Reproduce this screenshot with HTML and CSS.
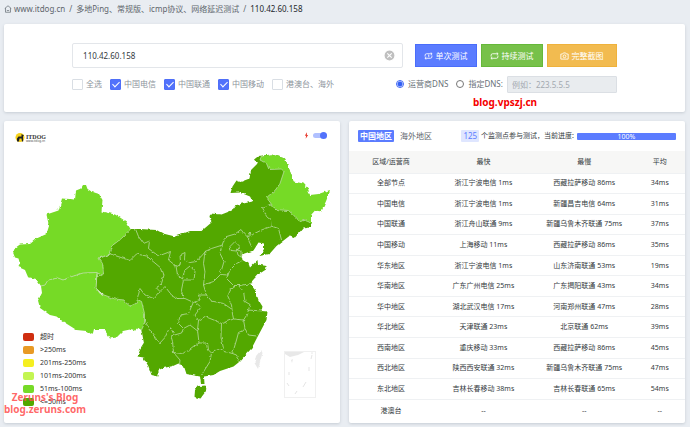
FILE: index.html
```
<!DOCTYPE html>
<html lang="zh-CN">
<head>
<meta charset="utf-8">
<title>110.42.60.158</title>
<link rel="stylesheet" href="styles.css">
</head>
<body>
<nav class="crumbs">
  <svg class="home" viewBox="0 0 16 16"><path d="M1.500 7 8 1.500 14.500 7M3 6v8.500h10V6M5.500 10.500q2.500 2 5 0"/></svg>
  <a href="#">www.itdog.cn</a><span>/</span><a href="#">多地Ping、常规版、icmp协议、网络延迟测试</a><span>/</span><b>110.42.60.158</b>
</nav>

<form class="card search">
  <div class="search-inner">
    <div class="row">
      <div class="host">
        <input type="text" value="110.42.60.158" aria-label="Host">
        <button type="button" class="clear" aria-label="Clear"><svg viewBox="0 0 10 10"><circle cx="5" cy="5" r="5"/><path d="M3 3l4 4M7 3l-4 4"/></svg></button>
      </div>
      <div class="actions">
        <button type="button" class="btn blue"><svg viewBox="0 0 16 14"><path d="M2 8V5.500Q2 3 4.500 3H14M12 1l2.500 2L12 5M14 6v2.500Q14 11 11.500 11H2M4 9l-2.500 2L4 13M7.500 5.500 8.500 5v4"/></svg>单次测试</button>
        <button type="button" class="btn green"><svg viewBox="0 0 16 14"><path d="M2 8V5.500Q2 3 4.500 3H14M12 1l2.500 2L12 5M14 6v2.500Q14 11 11.500 11H2M4 9l-2.500 2L4 13"/></svg>持续测试</button>
        <button type="button" class="btn amber"><svg viewBox="0 0 16 14"><path d="M1.500 3.500h3L6 1.500h4l1.500 2h3v9h-13z"/><circle cx="8" cy="7.500" r="2.500"/></svg>完整截图</button>
      </div>
    </div>
    <div class="row options">
      <div class="checks">
        <label><input type="checkbox">全选</label>
        <label><input type="checkbox" checked>中国电信</label>
        <label><input type="checkbox" checked>中国联通</label>
        <label><input type="checkbox" checked>中国移动</label>
        <label><input type="checkbox">港澳台、海外</label>
      </div>
      <div class="dns">
        <label><input type="radio" name="dns" checked>运营商DNS</label>
        <label><input type="radio" name="dns">指定DNS:</label>
        <input type="text" class="dns-input" placeholder="例如：223.5.5.5" aria-label="DNS" disabled>
      </div>
    </div>
  </div>
  <div class="mark mark-top">blog.vpszj.cn</div>
</form>

<main class="panels">
  <section class="card map-card">
    <svg class="map" viewBox="4 121 336 302">
      <defs>
        <filter id="rough" x="0" y="0" width="100%" height="100%">
          <feTurbulence type="fractalNoise" baseFrequency="0.22" numOctaves="2" seed="4"/>
          <feDisplacementMap in="SourceGraphic" scale="3" xChannelSelector="R" yChannelSelector="G"/>
        </filter>
      </defs>
      <g filter="url(#rough)">
        <path class="d" d="M130.500 229 140 229 156.500 230 163 233.500 175 236.500 190 231 201.500 231 211.500 222.500 209.500 216.500 210.500 213.500 221.500 214.500 233 210 236.500 205 252.500 201.500 250 196.500 240 192.500 230.500 193 232.500 186.500 236.500 180.500 240.500 182 249.500 178.500 251 170 257.500 163.500 254 159.500 258.500 156 271.500 154.500 285 158.500 289.500 170 293.500 181.500 300 215 311 222 311 227 306 228.500 304 227 298.500 233.500 295 237.500 290 235.500 276.500 246 269.500 254 259.500 256 264 249 264 243.500 258.500 242.500 253.500 250.500 241.500 254.500 242.500 260 248.500 263.500 250 267.500 257.500 260 258 264.500 266.500 266 266 269.500 257.500 275 250 283.500 255 290 258.500 300 262.500 306.500 261.500 311 267.500 311.500 266.500 320 258.500 335 251.500 348.500 238.500 362.500 233.500 366.500 220 371 213.500 375 204 376.500 204.500 384 201 384 200 376.500 186.500 374 184 366.500 178.500 363.500 173 366 163.500 368 158.500 370 158.500 376.500 151.500 375 148.500 366.500 143.500 357.500 137.500 356.500 140 350 144 343.500 141.500 330 96 288 99 258.500 113 245Z"/>
        <path class="d" d="M198 386 206.500 385.500 206 391 200.500 398.500 194.500 397 195 390Z"/>
        <path class="l" d="M83 185 81 188.500 76 190.500 75 199.500 62 198.500 58.500 210.500 46.500 214.500 49 226 46.500 234 36.500 238.500 30 244 20 244.500 15 248 13 252.500 15 257.500 18.500 258.500 20 264 18.500 267 25 270 28 277 36 279 41 286 45 285 48 280 58 278 63 280 72 276.500 83 273 97 272.500 100 275 103.500 274 102.500 268.500 104 269 102.500 263.500 99 258.500 110 254 113 245 121.500 238.500 130.500 229 126 221.500 120 217.500 115 214.500 101.500 211.500 102.500 200 99 194 91.500 191.500 87.500 189 86 185Z"/>
        <path class="l" d="M41 286 42 293 38 300.500 40 308 50 315 56.500 316.500 63 321.500 76.500 330 86.500 331 92.500 335 94 329 104 329 110 338.500 116.500 337.500 123 331 130 329.500 135 331 137.500 327.500 141.500 330 144.500 323.500 144.500 313.500 141.500 301.500 137.500 299.500 136 303.500 131.500 305.500 126.500 303.500 124 300 115 299 100 293.500 96 288 97 272.500 83 273 72 276.500 63 280 58 278 48 280 45 285Z"/>
        <path class="l" d="M261.500 156 260 160 266.500 163.500 269 169.500 281.500 169 284 171.500 280 183.500 275 190.500 266.500 197.500 271 203.500 275 209.500 288.500 210.500 295 216.500 300 221.500 306.500 220 311 224 311 215 315 210.500 321.500 211.500 326.500 200 330 190 318.500 194 310 195 308 188.500 303.500 183.500 293.500 181.500 289.500 170 285 158.500 271.500 154.500Z"/>
        <g class="b">
          <path d="M41 286 45 285 48 280 58 278 63 280 72 276.500 83 273 97 272.500 100 275 103.500 274 102.500 263.500 99 258.500 110 254 113 245 121.500 238.500 130.500 229"/>
          <path d="M97 273 96 288 100 293.500 115 299 124 300 126.500 303.500 131.500 305.500 136 303.500 137.500 299.500 141.500 301.500 144.500 313.500 144.500 323.500 141.500 330"/>
          <path d="M261.500 156 260 160 266.500 163.500 269 169.500 281.500 169 284 171.500 280 183.500 275 190.500 266.500 197.500 271 203.500 275 209.500 288.500 210.500 295 216.500 300 221.500 306.500 220 311 224"/>
          <path d="M271 204 262.500 207.500 266.500 216.500 270.500 220 271 226 278.500 228.500 281.500 240M271 226.500 261.500 230 251.500 235 249.500 232 248.500 240 251.500 246.500"/>
          <path d="M248.500 238 243.500 233 241 229.500 235 234 225 237 222.500 244 220 253.500 224 261.500 221.500 270 220 273M222.500 245 211.500 248.500 205 251.500 203.500 263.500 205 272 203.500 285 213.500 281.500 220.500 274.500 228.500 275"/>
          <path d="M230 246.500 235 241.500 240 246.500 236.500 251 231 250.500ZM236.500 249 241 251.500 241 257 238 255Z"/>
          <path d="M241.500 261 236.500 263.500 230 270 226.500 278.500 233.500 285.500 241.500 285.500 251.500 283M235 286.500 230.500 290 227.500 296.500 231.500 305 232.500 314 233.500 319"/>
          <path d="M238.500 285.500 243.500 291.500 245 301.500 250 304.500 248.500 310 262 311M250 310 243.500 320 245 328.500 248.500 335 256.500 336M244 330 238.500 332.500 236.500 340 232.500 353.500 236.500 355 238.500 361.500"/>
          <path d="M243.500 320 233.500 319 221.500 323.500 215 320.500 205 316.500 198.500 320.500 197.500 330 199 343 207.500 343 208.500 350 211.500 353 220 348.500 225 351.500 232.500 353.500M221.500 323.500 221 336.500 223.500 348.500M211.500 353 210 361.500 201.500 375"/>
          <path d="M199 343 190 350 181.500 353.500 173.500 352.500 180 360 179.500 365M197 330.500 190 325 183.500 328.500 181.500 333 171 336 172.500 341.500 173.500 352.500M183.500 328.500 178.500 323.500 180 315 188.500 313.500 193 303M195 302 201 307 195 315 198.500 320.500"/>
          <path d="M177 298.500 185 298.500 193.500 302.500 200 300 198.500 295 206.500 295 211.500 301 223.500 303.500 231.500 309M203.500 285 206.500 295"/>
          <path d="M135.500 229 138.500 236.500 143.500 243.500 149.500 241 148.500 248.500 158.500 256 170.500 251.500 168.500 260 176 266 180.500 263.500 180 255 185 252.500 184.500 260 190 262.500 196.500 261.500 206 251"/>
          <path d="M176 266 177.500 275 182.500 279 185 270 190 266 195 271.500 194 280 183.500 280 181.500 290 183 298"/>
          <path d="M99 258 110.500 254 130 260.500 136.500 254 146.500 256 161.500 268.500 164 275 161.500 283.500 156.500 288 160 291.500 165 286.500 171.500 295 177.500 298.500M159 292 153.500 298.500 145 295 140 288.500 137.500 299M145 320 148.500 328.500 159.500 343.500 165 337.500 170 326.500 173.500 333.500"/>
        </g>
        <path class="g" d="M261 350 262.500 353 258 369 254.500 363 256 356Z"/>
      </g>
      <rect class="inset" x="284.500" y="351.500" width="31" height="46"/>
      <path class="g" d="M285 352H304L298 355 290 357 285 354ZM311 352.500h2l-1 2zM291 360l2-1-1 4z"/>
      <path class="dash" d="M312 355l-1 4M309 367v4M306 382l-3 5M297 391l-2 3M287 383l2 3M289 372v3"/>
      <circle class="logo" cx="20" cy="137.500" r="4.500"/>
      <path class="dog" d="M17 141.500v-3l1.500-2h3v-2.500l1.500 1 1 .500-1 1 .2 5h-1.200l-.5-3h-2l-.5 3z"/>
      <text class="brand" x="26" y="138.500">ITDOG</text>
      <text class="brand-sub" x="26" y="142">www.itdog.cn</text>
    </svg>
    <label class="auto"><svg viewBox="0 0 6 8"><path d="M3.500 0 1 4.200h1.500L2 8l3-4.500H3.500z"/></svg><input type="checkbox" checked aria-label="Auto"></label>
    <ul class="legend">
      <li class="c1">超时</li><li class="c2">&gt;250ms</li><li class="c3">201ms-250ms</li><li class="c4">101ms-200ms</li><li class="c5">51ms-100ms</li><li class="c6">&lt;=50ms</li>
    </ul>
    <div class="mark mark-map">Zeruns's Blog<br>blog.zeruns.com</div>
  </section>

  <section class="card result">
    <header class="tabs">
      <button type="button" class="tab active">中国地区</button>
      <button type="button" class="tab">海外地区</button>
      <span class="count">125</span><span class="note">个监测点参与测试，当前进度:</span>
      <div class="bar">100%</div>
    </header>
    <div class="table-wrap">
    <table>
      <thead><tr><th>区域/运营商</th><th>最快</th><th>最慢</th><th>平均</th></tr></thead>
      <tbody>
        <tr><td>全部节点</td><td>浙江宁波电信 1ms</td><td>西藏拉萨移动 86ms</td><td>34ms</td></tr>
        <tr><td>中国电信</td><td>浙江宁波电信 1ms</td><td>新疆昌吉电信 64ms</td><td>31ms</td></tr>
        <tr><td>中国联通</td><td>浙江舟山联通 9ms</td><td>新疆乌鲁木齐联通 75ms</td><td>37ms</td></tr>
        <tr><td>中国移动</td><td>上海移动 11ms</td><td>西藏拉萨移动 86ms</td><td>35ms</td></tr>
        <tr><td>华东地区</td><td>浙江宁波电信 1ms</td><td>山东济南联通 53ms</td><td>19ms</td></tr>
        <tr><td>华南地区</td><td>广东广州电信 25ms</td><td>广东揭阳联通 43ms</td><td>34ms</td></tr>
        <tr><td>华中地区</td><td>湖北武汉电信 17ms</td><td>河南郑州联通 47ms</td><td>28ms</td></tr>
        <tr><td>华北地区</td><td>天津联通 23ms</td><td>北京联通 62ms</td><td>39ms</td></tr>
        <tr><td>西南地区</td><td>重庆移动 33ms</td><td>西藏拉萨移动 86ms</td><td>45ms</td></tr>
        <tr><td>西北地区</td><td>陕西西安联通 32ms</td><td>新疆乌鲁木齐联通 75ms</td><td>47ms</td></tr>
        <tr><td>东北地区</td><td>吉林长春移动 38ms</td><td>吉林长春联通 65ms</td><td>54ms</td></tr>
        <tr><td>港澳台</td><td>--</td><td>--</td><td>--</td></tr>
      </tbody>
    </table>
    </div>
  </section>
</main>
</body>
</html>
```

FILE: styles.css
```
* { box-sizing: border-box; }
body {
  margin: 0;
  padding: 0 5px 3px 4px;
  background: #e9edf2;
  color: #3c4045;
  font: 8px/12px "Noto Sans", "Noto Sans CJK SC", sans-serif;
}
button, input { font: inherit; color: inherit; margin: 0; }
a { color: #5f666d; text-decoration: none; }
.crumbs { display: flex; align-items: center; height: 24px; padding-bottom: 7px; color: #5f666d; }
.crumbs span { padding: 0 4px; }
.crumbs b { font-weight: 400; color: #24282c; }
.home { width: 8px; height: 8px; margin-right: 2px; fill: none; stroke: #6a7178; stroke-width: 1.500; }
.card { position: relative; background: #fff; border-radius: 2px; box-shadow: 0 1px 3px #c6ccd4; }

.search { padding: 19px 0 20px; }
.search-inner { width: 80%; margin: 0 auto; }
.row { display: flex; justify-content: space-between; gap: 12px; }
.host { position: relative; flex: 1; display: flex; }
.host input { width: 100%; height: 25px; padding: 0 10px; border: 1px solid #e3e6ea; border-radius: 2px; color: #343a40; }
.clear { position: absolute; right: 8px; top: 7px; width: 11px; height: 11px; padding: 0; border: 0; background: none; }
.clear svg { display: block; fill: #bfbfbf; stroke: #fff; }
.actions { display: flex; gap: 4px; padding: 1px 0; }
.btn { display: flex; align-items: center; justify-content: center; gap: 2px; width: 62px; padding: 0; border: 1px solid; color: #fff; }
.btn svg { width: 9px; height: 8px; fill: none; stroke: #fff; stroke-width: 1.500; }
.blue { background: #5b7cff; border-color: #4a6dfa; }
.green { background: #77c14a; border-color: #66b83a; }
.amber { width: 70px; background: #f2bb50; border-color: #efb23c; }
.options { margin-top: 8px; height: 16px; align-items: center; }
.checks, .dns, .options label { display: flex; align-items: center; }
.checks { gap: 8px; color: #8d949c; }
.checks label { gap: 3px; }
.checks input { appearance: none; width: 11px; height: 11px; border: 1px solid #d9dee4; border-radius: 1px; background: #fff; }
.checks input:checked { border-color: #4f6ff8; background: #5272fb; display: grid; place-items: center; }
.checks input:checked::after { content: ""; width: 3px; height: 6px; margin-bottom: 2px; border: solid #fff; border-width: 0 1px 1px 0; rotate: 45deg; }
.dns { gap: 8px; color: #6a7178; }
.dns label { gap: 4px; }
.dns label + label { margin-right: -4px; }
.dns input[type="radio"] { appearance: none; width: 8px; height: 8px; border: 1px solid #777; border-radius: 50%; }
.dns input[type="radio"]:checked { border-color: #3f66f5; background: radial-gradient(#3360f4 2px, #fff 3px); }
.dns-input { width: 110px; height: 17px; padding: 0 4px; border: 1px solid #dbdfe4; border-radius: 1px; background: #e9ecef; }
.dns-input::placeholder { color: #a3a9b0; }
.mark { position: absolute; font-weight: 700; color: #f50000; }
.mark-top { left: 469px; bottom: 3px; font-size: 10px; line-height: 14px; }

.panels { display: grid; grid-template-columns: 1fr 1fr; gap: 9px; margin-top: 9px; }
.map { display: block; width: 100%; }
.d { fill: #52a800; }
.l { fill: #76da27; }
.g { fill: #e8e8e8; }
.b { fill: none; stroke: #b9dca0; stroke-width: 0.8; stroke-linejoin: round; }
.inset { fill: none; stroke: #f0f0f0; }
.dash { fill: none; stroke: #e5e5e5; }
.logo { fill: #f6d21b; }
.dog { fill: #222; }
.brand { font: 700 6px "Liberation Serif", serif; fill: #333; }
.brand-sub { font: 3px "Noto Sans", sans-serif; fill: #555; }
.auto { position: absolute; right: 13px; top: 11px; display: flex; align-items: center; gap: 4px; }
.auto svg { width: 5px; height: 7px; fill: #e83b2e; }
.auto input { appearance: none; display: flex; align-items: center; justify-content: flex-end; width: 14px; height: 5px; border-radius: 3px; background: #b0c0ff; }
.auto input::after { content: ""; width: 7px; height: 7px; flex: none; border-radius: 50%; background: #5272fb; }
.legend { position: absolute; left: 19px; bottom: 15px; margin: 0; padding: 0; list-style: none; font-size: 7px; line-height: 13px; color: #333; }
.legend li { display: flex; align-items: center; gap: 6px; }
.legend li::before { content: ""; width: 11px; height: 8px; border-radius: 2px; background: currentcolor; }
.c1::before { color: #cf2e10; }
.c2::before { color: #e89a25; }
.c3::before { color: #f5ef20; }
.c4::before { color: #c3f552; }
.c5::before { color: #76da27; }
.c6::before { color: #52a800; }
.mark-map { left: 0; bottom: 8px; color: #ff4d4dd9; font-size: 10px; line-height: 12px; text-align: center; }

.result { display: flex; flex-direction: column; color: #343a40; }
.tabs { display: flex; align-items: center; height: 30px; padding: 0 9px; }
.tab { height: 12px; line-height: 12px; padding: 0 2px; margin-right: 4px; border: 0; border-radius: 1px; background: none; color: #5f666d; }
.tab.active { background: #5b7cff; color: #fff; font-weight: 700; }
.count { margin-left: auto; padding: 0 2px; border-radius: 1px; background: #dfe6ff; color: #5b7cff; }
.note { margin: 0 3px 0 2px; font-size: 7px; white-space: nowrap; }
.bar { width: 99px; height: 7px; border-radius: 1px; background: #5b7cff; color: #fff; font-size: 7px; line-height: 7px; text-align: center; }
.table-wrap { flex: 1; }
table { width: 100%; height: 100%; border-collapse: collapse; table-layout: fixed; font-size: 7px; line-height: 10px; }
th, td { height: 20px; padding: 0; text-align: center; font-weight: 400; border-bottom: 1px solid #eff1f3; white-space: nowrap; }
th { height: 22px; background: #f7f7f6; }
th:nth-child(1) { width: 25%; }
th:nth-child(2) { width: 30%; }
th:nth-child(3) { width: 30%; }
tr:last-child td { border-bottom: 0; }
tbody tr:last-child td { height: 23px; }
```
